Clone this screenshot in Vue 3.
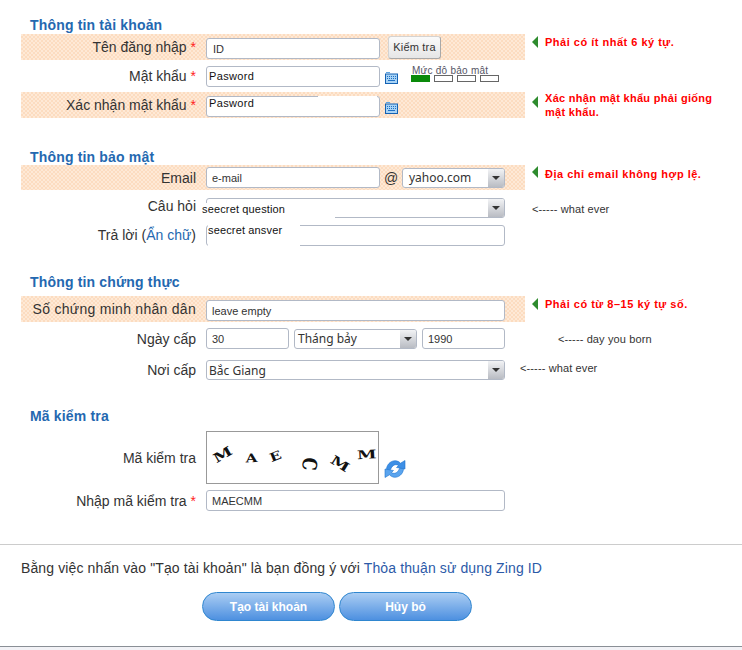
<script setup>
const months = 'Tháng bảy'
const captcha = [
  { c: 'M', cls: 'c1' },
  { c: 'A', cls: 'c2' },
  { c: 'E', cls: 'c3' },
  { c: 'C', cls: 'c4' },
  { c: 'M', cls: 'c5' },
  { c: 'M', cls: 'c6' }
]
</script>

<template>
  <div class="page">
    <section class="sec first">
      <h3>Thông tin tài khoản</h3>
      <div class="row r26">
        <div class="main hl">
          <label>Tên đăng nhập <i>*</i></label>
          <div class="field">
            <input class="inp w174 idpad" value="ID" readonly />
            <button class="check">Kiểm tra</button>
          </div>
        </div>
        <p class="msg"><b class="tri"></b><span>Phải có ít nhất 6 ký tự.</span></p>
      </div>
      <div class="row r32">
        <div class="main">
          <label>Mật khẩu <i>*</i></label>
          <div class="field">
            <input class="inp w174 pw" value="Pasword" readonly />
            <svg class="kb" viewBox="0 0 13 12">
              <path d="M1 .5h4" fill="none" stroke="#5fa4e0"/>
              <rect x=".5" y="2" width="12" height="9.500" fill="#a8d3f5" stroke="#1462b4"/>
              <path d="M2 4.500h9M2 6.500h9" stroke="#1f70c4" stroke-dasharray="1 1"/>
              <path d="M3 8.500h7" stroke="#1f70c4"/>
            </svg>
            <div class="strength">
              <span class="stitle">Mức độ bảo mật</span>
              <div class="bars"><b class="on"></b><b></b><b></b><b></b></div>
            </div>
          </div>
        </div>
      </div>
      <div class="row r26">
        <div class="main hl">
          <label>Xác nhận mật khẩu <i>*</i></label>
          <div class="field">
            <div class="patched">
              <input class="inp w174 pw pwtop" value="Pasword" readonly />
              <span class="patch-top"></span>
            </div>
            <svg class="kb kb2" viewBox="0 0 13 12">
              <path d="M1 .5h4" fill="none" stroke="#5fa4e0"/>
              <rect x=".5" y="2" width="12" height="9.500" fill="#a8d3f5" stroke="#1462b4"/>
              <path d="M2 4.500h9M2 6.500h9" stroke="#1f70c4" stroke-dasharray="1 1"/>
              <path d="M3 8.500h7" stroke="#1f70c4"/>
            </svg>
          </div>
        </div>
        <p class="msg two"><b class="tri"></b><span>Xác nhận mật khẩu phải giống<br />mật khẩu.</span></p>
      </div>
    </section>

    <section class="sec s2">
      <h3>Thông tin bảo mật</h3>
      <div class="row r25">
        <div class="main hl">
          <label>Email</label>
          <div class="field">
            <input class="inp w174" value="e-mail" readonly />
            <span class="at">@</span>
            <div class="sel w103 yahoo"><span>yahoo.com</span><em></em></div>
          </div>
        </div>
        <p class="msg up"><b class="tri"></b><span>Địa chỉ email không hợp lệ.</span></p>
      </div>
      <div class="row r27 mt8">
        <div class="main top">
          <label class="lift1">Câu hỏi</label>
          <div class="field">
            <div class="sel w299"><span></span><em></em></div>
            <span class="q-patch">seecret question</span>
          </div>
        </div>
        <p class="note n1">&lt;----- what ever</p>
      </div>
      <div class="row r21">
        <div class="main">
          <label class="lift">Trả lời (<a>Ẩn chữ</a>)</label>
          <div class="field">
            <input class="inp w299" readonly />
            <span class="a-patch">seecret ansver</span>
          </div>
        </div>
      </div>
    </section>

    <section class="sec s3">
      <h3>Thông tin chứng thực</h3>
      <div class="row r26">
        <div class="main hl">
          <label class="wide">Số chứng minh nhân dân</label>
          <div class="field">
            <input class="inp w299" value="leave empty" readonly />
          </div>
        </div>
        <p class="msg"><b class="tri"></b><span>Phải có từ 8–15 ký tự số.</span></p>
      </div>
      <div class="row r33">
        <div class="main">
          <label>Ngày cấp</label>
          <div class="field g5">
            <input class="inp w83" value="30" readonly />
            <div class="sel w123 thang"><span>{{ months }}</span><em></em></div>
            <input class="inp w83" value="1990" readonly />
          </div>
        </div>
        <p class="note n2">&lt;----- day you born</p>
      </div>
      <div class="row r30">
        <div class="main">
          <label>Nơi cấp</label>
          <div class="field">
            <div class="sel w299 place"><span>Bắc Giang</span><em></em></div>
          </div>
        </div>
        <p class="note n3">&lt;----- what ever</p>
      </div>
    </section>

    <section class="sec s4">
      <h3>Mã kiểm tra</h3>
      <div class="row capt">
        <div class="main">
          <label>Mã kiểm tra</label>
          <div class="field">
            <div class="captcha">
              <span v-for="(l, i) in captcha" :key="i" :class="l.cls">{{ l.c }}</span>
            </div>
            <svg class="refresh" viewBox="0 0 22 22">
              <path d="M2.500 11.500C2.500 6 8 1.500 13 3c1.500.4 2.500 1.200 3.500 2.200L21 2.500V11l-8.500-1.500 2-2C12 5.800 8.500 6.500 6.500 11.500z" fill="#3d8fe6" stroke="#1f74cf" stroke-width=".6"/>
              <path d="M19.500 10.500C19.500 16 14 20.500 9 19c-1.500-.4-2.500-1.200-3.500-2.200L1 19.500V11l8.500 1.500-2 2c2.500 1.700 6 1 8-4z" fill="#5aa4ee" stroke="#1f74cf" stroke-width=".6"/>
            </svg>
          </div>
        </div>
      </div>
      <div class="row r21 mt6">
        <div class="main">
          <label>Nhập mã kiểm tra <i>*</i></label>
          <div class="field">
            <input class="inp w299" value="MAECMM" readonly />
          </div>
        </div>
      </div>
    </section>

    <footer class="foot">
      <p class="terms">Bằng việc nhấn vào "Tạo tài khoản" là bạn đồng ý với <a>Thỏa thuận sử dụng Zing ID</a></p>
      <div class="btns">
        <button class="pill">Tạo tài khoản</button>
        <button class="pill">Hủy bỏ</button>
      </div>
    </footer>
    <div class="bottom"></div>
  </div>
</template>

<style scoped>
.page {
  position: relative;
  width: 742px;
  height: 650px;
  overflow: hidden;
  background: #fff;
  font-family: "Liberation Sans", Arial, sans-serif;
  color: #333;
}
h3 {
  margin: 0;
  padding-left: 30px;
  height: 17px;
  font-size: 14px;
  line-height: 17px;
  font-weight: bold;
  letter-spacing: .17px;
  color: #2468b0;
}
.sec { margin: 0; }
.first { padding-top: 17px; }
.s2 { margin-top: 31px; }
.s2 h3 { height: 16px; }
.s3 { margin-top: 28px; }
.s3 h3 { height: 22px; }
.s4 { margin-top: 23px; }
.s4 h3 { height: 23px; }

.row { display: flex; margin-left: 21px; }
.main {
  display: flex;
  align-items: center;
  width: 504px;
  height: 100%;
  flex: none;
}
.main.top { align-items: flex-start; }
.hl {
  background-color: #fde3cb;
  background-image: repeating-conic-gradient(#fcdcc0 0 25%, #fee9d6 0 50%);
  background-size: 4px 4px;
}
.r21 { height: 21px; }
.r25 { height: 25px; }
.r26 { height: 26px; }
.r27 { height: 27px; }
.r30 { height: 30px; }
.r32 { height: 32px; }
.r33 { height: 33px; }
.mt8 { margin-top: 8px; }
.mt6 { margin-top: 6px; }
.capt { height: 53px; }

label {
  width: 175px;
  flex: none;
  text-align: right;
  font-size: 14px;
  line-height: 18px;
  color: #333;
}
label i { font-style: normal; color: #f22; }
label a { color: #2468b0; }
label.wide { letter-spacing: .28px; }
label.lift { margin-top: -2px; }
label.lift1 { margin-top: -1px; }
.field {
  position: relative;
  margin-left: 10px;
  display: flex;
  align-items: center;
}
.r26 .field { margin-top: 3px; }
.g5 { gap: 5px; }

.inp {
  box-sizing: border-box;
  height: 21px;
  padding: 0 5px;
  border: 1px solid #b2b9c6;
  border-width: 1px 1px 1.5px 1px;
  border-radius: 3px;
  background: #fff;
  font: 11px "Liberation Sans", Arial, sans-serif;
  color: #333;
  outline: none;
}
.w174 { width: 174px; }
.w299 { width: 299px; }
.w83 { width: 83px; }
.idpad { padding-left: 6px; }
.pw { padding-left: 2px; letter-spacing: .35px; color: #111; }
.pwtop { padding-bottom: 8px; }
.patched { position: relative; display: flex; }
.patch-top {
  position: absolute;
  left: 112px;
  right: 3px;
  top: 0;
  height: 2px;
  background: #fff;
}

.check {
  margin: -3px 0 0 8px;
  box-sizing: border-box;
  width: 53px;
  height: 23px;
  padding: 0;
  border: 1px solid #d3d3d3;
  border-radius: 3px;
  border-right-color: #a8a8a8;
  border-bottom-color: #a8a8a8;
  background: linear-gradient(#fafafa, #e6e6e6);
  font: 11px "Liberation Sans", Arial, sans-serif;
  letter-spacing: .2px;
  color: #333;
}
.kb { width: 13px; height: 12px; margin-left: 5px; margin-top: 4px; flex: none; }
.kb2 { margin-top: 2px; }
.strength { margin-left: 13px; margin-top: -5px; width: 92px; }
.stitle {
  display: block;
  padding-left: 1px;
  font-size: 10px;
  line-height: 11px;
  letter-spacing: .25px;
  color: #556;
  white-space: nowrap;
}
.bars { display: flex; gap: 4px; margin-top: -1px; }
.bars b {
  box-sizing: border-box;
  width: 19px;
  height: 7px;
  border: 1px solid #666;
}
.bars b.on { background: #0a8a0a; border-color: #0a8a0a; }

.at { margin: 0 5px 0 4px; font-size: 14px; width: 13px; color: #333; }
.sel {
  box-sizing: border-box;
  position: relative;
  height: 20px;
  border: 1px solid #b2b9c6;
  border-width: 1px 1px 1.5px 1px;
  border-radius: 3px;
  background: #fff;
  display: flex;
  align-items: center;
  padding-left: 6px;
  font: 12px "Noto Sans", sans-serif;
  color: #333;
}
.yahoo { padding-left: 6px; }
.thang { padding-left: 3px; }
.place { padding-left: 2px; }
.sel em {
  position: absolute;
  right: 0;
  top: 0;
  bottom: 0;
  width: 16px;
  border-radius: 0 2px 2px 0;
  background: linear-gradient(#f2f3f5, #b9bcc3);
}
.sel em::after {
  content: "";
  position: absolute;
  left: 4px;
  top: 7px;
  border: 4px solid transparent;
  border-top: 4px solid #333;
  border-bottom: 0;
}
.w103 { width: 103px; }
.w123 { width: 123px; }

.q-patch {
  position: absolute;
  left: -4px;
  top: 5px;
  width: 133px;
  height: 17px;
  background: #fff;
  font-size: 11px;
  line-height: 12px;
  letter-spacing: .15px;
  color: #111;
}
.a-patch {
  position: absolute;
  left: 2px;
  top: -1px;
  width: 92px;
  height: 24px;
  background: #fff;
  font-size: 11px;
  line-height: 12px;
  letter-spacing: .15px;
  color: #111;
}

.msg {
  position: relative;
  margin: 1px 0 0 7px;
  padding-left: 13px;
  font-size: 11px;
  line-height: 14px;
  font-weight: bold;
  letter-spacing: .5px;
  color: #f00;
  white-space: nowrap;
}
.msg.two { margin-top: -1px; letter-spacing: .3px; }
.msg.up { margin-top: 2px; }
.tri {
  position: absolute;
  left: 0;
  top: 1px;
  border: 6px solid transparent;
  border-left: 0;
  border-right: 6px solid #2e8b2e;
}
.msg.two .tri { top: 5px; }
.msg.up .tri { top: -1px; }
.note {
  margin: 0;
  font-size: 11px;
  letter-spacing: .12px;
  color: #333;
  white-space: nowrap;
}
.n1 { margin: 5px 0 0 7px; line-height: 12px; }
.n2 { margin: 11px 0 0 33px; line-height: 12px; }
.n3 { margin: 7px 0 0 -5px; line-height: 12px; }

.captcha {
  box-sizing: border-box;
  position: relative;
  display: flex;
  width: 173px;
  height: 53px;
  border: 1px solid #999;
  background: #fff;
  font-family: "DejaVu Serif", serif;
  font-weight: bold;
  color: #111;
}
.captcha span { position: absolute; line-height: 1; }
.c1 { left: 7px; top: 15px; font-size: 16px; transform: rotate(-30deg) scale(1.1, .8); }
.c2 { left: 39px; top: 19px; font-size: 14px; transform: rotate(-3deg) scale(1.1, .85); }
.c3 { left: 63px; top: 17px; font-size: 14px; transform: rotate(-22deg) scale(1.1, .85); }
.c4 { left: 95px; top: 23px; font-size: 18px; transform: rotate(95deg) scale(.9, 1.1); }
.c5 { left: 124px; top: 24px; font-size: 16px; transform: rotate(32deg) scale(1.1, .8); }
.c6 { left: 151px; top: 15px; font-size: 16px; transform: rotate(-3deg) scale(1.1, .75); }
.refresh { width: 22px; height: 22px; margin: 23px 0 0 5px; flex: none; }

.foot {
  margin-top: 33px;
  border-top: 1px solid #ccc;
  height: 101px;
}
.terms {
  margin: 15px 0 0 21px;
  font-size: 14px;
  line-height: 16px;
  letter-spacing: .12px;
  color: #333;
}
.terms a { color: #2c5aa8; }
.btns { display: flex; gap: 4px; margin: 16px 0 0 202px; }
.pill {
  box-sizing: border-box;
  width: 133px;
  height: 29px;
  padding: 0;
  border: 1px solid #2f86cf;
  border-radius: 15px;
  background: linear-gradient(#abcdf3, #4d90e0);
  font: bold 12px "Liberation Sans", Arial, sans-serif;
  color: #fff;
}
.bottom {
  position: absolute;
  left: 0;
  right: 0;
  bottom: 0;
  height: 3px;
  border-top: 1px solid #8a8f96;
  background: #f2f2f6;
}
</style>
